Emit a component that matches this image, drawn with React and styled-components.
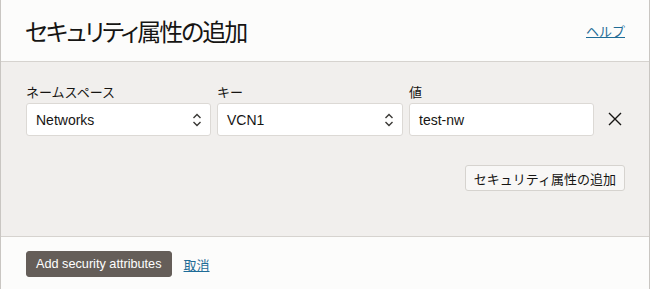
import React from "react";
import styled, { createGlobalStyle } from "styled-components";

const Global = createGlobalStyle`
  html, body {
    margin: 0;
    padding: 0;
    background: #fcfcfb;
  }
  body {
    font-family: "Liberation Sans", "Noto Sans CJK JP", sans-serif;
    color: #161513;
  }
`;

const Panel = styled.div`
  width: 650px;
  height: 289px;
  box-sizing: border-box;
  border-left: 1px solid #c9c6c2;
  border-right: 1px solid #c9c6c2;
  display: flex;
  flex-direction: column;
  background: #fcfcfb;
`;

const Header = styled.header`
  height: 62px;
  box-sizing: border-box;
  display: flex;
  align-items: center;
  justify-content: space-between;
  padding: 0 24px 0 24px;
  border-bottom: 1px solid #d6d3cf;
`;

const Title = styled.h1`
  margin: 0;
  font-family: "Noto Sans CJK JP", sans-serif;
  font-weight: 400;
  font-size: 24px;
  letter-spacing: -2px;
  font-feature-settings: "palt";
  color: #161513;
`;

const Link = styled.a`
  font-family: "Noto Sans CJK JP", sans-serif;
  font-size: 13px;
  color: #1f6c97;
  text-decoration: underline;
  cursor: pointer;
`;

const Body = styled.main`
  flex: 1;
  background: #f1efed;
  padding: 21px 24px 0 25px;
  border-bottom: 1px solid #d6d3cf;
  display: flex;
  flex-direction: column;
`;

const Row = styled.div`
  display: flex;
  align-items: flex-end;
  gap: 6px;
`;

const Field = styled.label`
  display: flex;
  flex-direction: column;
  flex-shrink: 0;
  width: ${(p) => p.width}px;
`;

const Label = styled.span`
  font-family: "Noto Sans CJK JP", sans-serif;
  font-size: 13px;
  line-height: 18px;
  margin-bottom: 2px;
  color: #161513;
`;

const Box = styled.div`
  height: 33px;
  box-sizing: border-box;
  background: #fff;
  border: 1px solid #dcd9d5;
  border-radius: 3px;
  display: flex;
  align-items: center;
  justify-content: space-between;
  padding: 0 8px 0 9px;
  font-size: 14px;
  color: #161513;
`;

const Remove = styled.button`
  flex-shrink: 0;
  border: none;
  background: none;
  padding: 0;
  margin: 0 0 9px 7px;
  width: 16px;
  height: 16px;
  display: flex;
  align-items: center;
  justify-content: center;
`;

const Actions = styled.div`
  display: flex;
  justify-content: flex-end;
  margin-top: 29px;
`;

const Button = styled.button`
  height: 26px;
  box-sizing: border-box;
  padding: 0 ${(p) => (p.primary ? 9 : 8)}px;
  border-radius: 3px;
  font-family: "Liberation Sans", "Noto Sans CJK JP", sans-serif;
  font-size: ${(p) => (p.primary ? 12.7 : 13)}px;
  border: 1px solid ${(p) => (p.primary ? "#655e59" : "#d6d3cf")};
  background: ${(p) => (p.primary ? "#655e59" : "#f8f7f6")};
  color: ${(p) => (p.primary ? "#fff" : "#161513")};
`;

const Footer = styled.footer`
  height: 52px;
  box-sizing: border-box;
  display: flex;
  align-items: center;
  gap: 12px;
  padding: 2px 25px 0 25px;
`;

const Chevrons = () => (
  <svg width="10" height="16" viewBox="0 0 10 16" fill="none" stroke="#3a3835" strokeWidth="1.4">
    <path d="M1.5 6 L5 2.5 L8.5 6" />
    <path d="M1.5 10 L5 13.5 L8.5 10" />
  </svg>
);

const Close = () => (
  <svg width="14" height="14" viewBox="0 0 14 14" stroke="#161513" strokeWidth="1.4">
    <path d="M1 1 L13 13 M13 1 L1 13" />
  </svg>
);

export default function App() {
  return (
    <>
      <Global />
      <Panel>
        <Header>
          <Title>セキュリティ属性の追加</Title>
          <Link>ヘルプ</Link>
        </Header>
        <Body>
          <Row>
            <Field width={185}>
              <Label>ネームスペース</Label>
              <Box>
                Networks
                <Chevrons />
              </Box>
            </Field>
            <Field width={186}>
              <Label>キー</Label>
              <Box>
                VCN1
                <Chevrons />
              </Box>
            </Field>
            <Field width={185}>
              <Label>値</Label>
              <Box>test-nw</Box>
            </Field>
            <Remove>
              <Close />
            </Remove>
          </Row>
          <Actions>
            <Button>セキュリティ属性の追加</Button>
          </Actions>
        </Body>
        <Footer>
          <Button primary>Add security attributes</Button>
          <Link>取消</Link>
        </Footer>
      </Panel>
    </>
  );
}
